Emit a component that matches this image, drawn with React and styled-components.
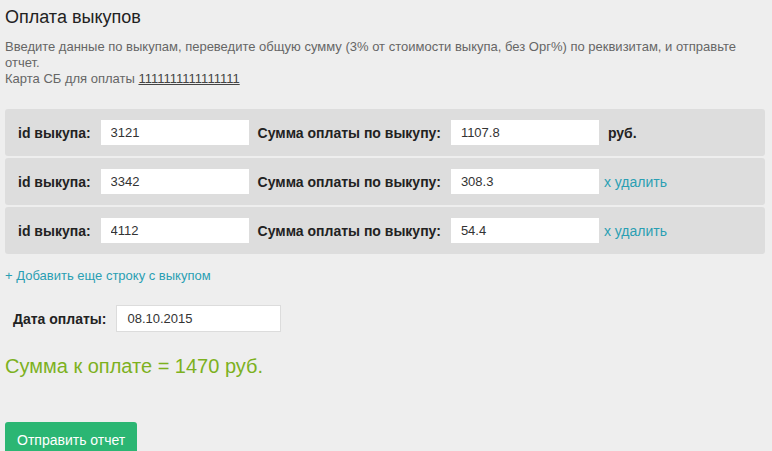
import React from "react";
import styled, { createGlobalStyle } from "styled-components";

const Global = createGlobalStyle`
  body {
    margin: 0;
    background: #eeeeee;
    font-family: "Liberation Sans", Arial, sans-serif;
    color: #333;
  }
`;

const Page = styled.div`
  padding: 6px 5px 0 5px;
  height: 451px;
  overflow: hidden;
  box-sizing: border-box;
`;

const Title = styled.h1`
  font-size: 18px;
  font-weight: normal;
  color: #222;
  margin: 0 0 11px 0;
  line-height: 22px;
`;

const Intro = styled.p`
  font-size: 13px;
  line-height: 16px;
  color: #666;
  margin: 0 0 22px 0;
  padding-right: 20px;
`;

const Card = styled.span`
  color: #444;
  text-decoration: underline;
`;

const Rows = styled.div`
  display: flex;
  flex-direction: column;
  gap: 2px;
  width: 760px;
`;

const Row = styled.div`
  display: flex;
  align-items: center;
  height: 47px;
  background: #dddddd;
  border-radius: 3px;
  padding-left: 13px;
`;

const Label = styled.span`
  font-size: 14px;
  font-weight: bold;
  color: #222;
  margin-right: ${({ $gap }) => $gap}px;
`;

const Field = styled.input`
  width: ${({ $w }) => $w}px;
  height: ${({ $h }) => $h}px;
  box-sizing: border-box;
  border: ${({ $border }) => ($border ? "1px solid #dcdcdc" : "none")};
  background: #fff;
  font-family: "Liberation Sans", Arial, sans-serif;
  font-size: 13px;
  color: #333;
  padding: 0 10px;
  outline: none;
  margin-right: ${({ $after }) => $after}px;
`;

const Unit = styled.span`
  font-size: 14px;
  font-weight: bold;
  color: #222;
`;

const Remove = styled.a`
  font-size: 14px;
  color: #2a9fb3;
  text-decoration: none;
  cursor: pointer;
`;

const AddLink = styled.a`
  display: block;
  font-size: 13px;
  color: #2a9fb3;
  text-decoration: none;
  margin: 14px 0 0 0;
  cursor: pointer;
`;

const DateRow = styled.div`
  display: flex;
  align-items: center;
  margin: 22px 0 0 8px;
`;

const Total = styled.div`
  font-size: 20px;
  color: #7db11e;
  margin-top: 23px;
`;

const Submit = styled.button`
  margin-top: 44px;
  background: #2bb673;
  color: #fff;
  border: none;
  border-radius: 3px;
  font-family: "Liberation Sans", Arial, sans-serif;
  font-size: 14px;
  padding: 10px 12px;
  cursor: pointer;
`;

const rows = [
  { id: "3121", sum: "1107.8", first: true },
  { id: "3342", sum: "308.3" },
  { id: "4112", sum: "54.4" },
];

export default function App() {
  return (
    <Page>
      <Global />
      <Title>Оплата выкупов</Title>
      <Intro>
        Введите данные по выкупам, переведите общую сумму (3% от стоимости выкупа, без Орг%) по реквизитам, и отправьте отчет.
        <br />
        Карта СБ для оплаты <Card>1111111111111111</Card>
      </Intro>
      <Rows>
        {rows.map((r) => (
          <Row key={r.id}>
            <Label $gap={10}>id выкупа:</Label>
            <Field $w={148} $h={25} $after={9} defaultValue={r.id} />
            <Label $gap={10}>Сумма оплаты по выкупу:</Label>
            <Field $w={148} $h={25} $after={r.first ? 9 : 5} defaultValue={r.sum} />
            {r.first ? <Unit>руб.</Unit> : <Remove>x удалить</Remove>}
          </Row>
        ))}
      </Rows>
      <AddLink>+ Добавить еще строку с выкупом</AddLink>
      <DateRow>
        <Label $gap={10}>Дата оплаты:</Label>
        <Field $w={165} $h={27} $after={0} $border defaultValue="08.10.2015" />
      </DateRow>
      <Total>Сумма к оплате = 1470 руб.</Total>
      <Submit>Отправить отчет</Submit>
    </Page>
  );
}
